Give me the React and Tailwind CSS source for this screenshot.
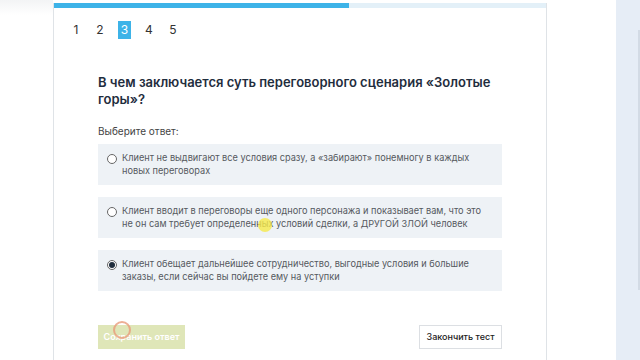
import React from "react";

const options = [
  { lines: ["Клиент не выдвигают все условия сразу, а «забирают» понемногу в каждых", "новых переговорах"], checked: false },
  { lines: ["Клиент вводит в переговоры еще одного персонажа и показывает вам, что это", "не он сам требует определенных условий сделки, а ДРУГОЙ ЗЛОЙ человек"], checked: false },
  { lines: ["Клиент обещает дальнейшее сотрудничество, выгодные условия и большие", "заказы, если сейчас вы пойдете ему на уступки"], checked: true },
];

export default function App() {
  return (
    <div className="w-[640px] h-[360px] overflow-hidden bg-white flex relative" style={{ fontFamily: "Inter, 'Open Sans', sans-serif" }}>
      <div className="w-[53px] shrink-0">
        <div className="h-[15px] bg-gradient-to-b from-[#f3f4f5] to-white" />
      </div>
      <div className="w-[494px] shrink-0 mt-[3px] border-l border-r border-[#dfe3e7] flex flex-col">
        <div className="h-[5px] bg-[#e3f0f8] flex">
          <div className="w-[295px] h-full bg-[#3db3e8]" />
        </div>
        <div className="flex items-center pl-[10px] mt-[13px] text-[12px] text-[#333]">
          <span className="w-[24px] text-center">1</span>
          <span className="w-[24px] text-center">2</span>
          <span className="w-[13px] h-[18px] flex items-center justify-center bg-[#3db3e8] text-white mx-[6px]">3</span>
          <span className="w-[24px] text-center">4</span>
          <span className="w-[24px] text-center">5</span>
        </div>
        <div className="px-[44px] mt-[35px]">
          <h1 className="text-[13px] leading-[17px] font-semibold text-[#1f2d3d] w-[400px]">
            В чем заключается суть переговорного сценария «Золотые горы»?
          </h1>
          <div className="mt-[16px] text-[10px] text-[#444]">Выберите ответ:</div>
          <div className="mt-[5px] flex flex-col gap-[12px] w-[404px]">
            {options.map((o, i) => (
              <div key={i} className="h-[41px] bg-[#eef2f6] flex items-center pl-[9px] pr-[8px] gap-[5px]">
                <span className="w-[10px] h-[10px] rounded-full border border-[#666] bg-white flex items-center justify-center shrink-0 self-start mt-[10px]">
                  {o.checked && <span className="w-[6px] h-[6px] rounded-full bg-[#1f2d3d]" />}
                </span>
                <span className="flex flex-col text-[9.2px] leading-[12.5px] text-[#55595e] whitespace-nowrap">
                  {o.lines.map((l, j) => <span key={j}>{l}</span>)}
                </span>
              </div>
            ))}
          </div>
          <div className="mt-[34px] flex justify-between w-[404px]">
            <button className="w-[87px] h-[24px] bg-[#dfe6b8] text-white text-[9px] font-semibold">Сохранить ответ</button>
            <button className="w-[83px] h-[24px] bg-white border border-[#dcdfe3] text-[#222] text-[9px] font-medium">Закончить тест</button>
          </div>
        </div>
      </div>
      <div className="w-[69px] shrink-0" />
      <div className="flex-1 bg-[#e6edf6] flex justify-end">
        <div className="w-[2px] mt-[30px] h-[260px] bg-[#d3dbe5]" />
      </div>
      <div className="absolute left-[258px] top-[218px] w-[14px] h-[14px] rounded-full bg-[#f5e84a] opacity-80" />
      <div className="absolute left-[113px] top-[321px] w-[18px] h-[18px] rounded-full border-2 border-[#e89b7a] opacity-80" />
    </div>
  );
}
